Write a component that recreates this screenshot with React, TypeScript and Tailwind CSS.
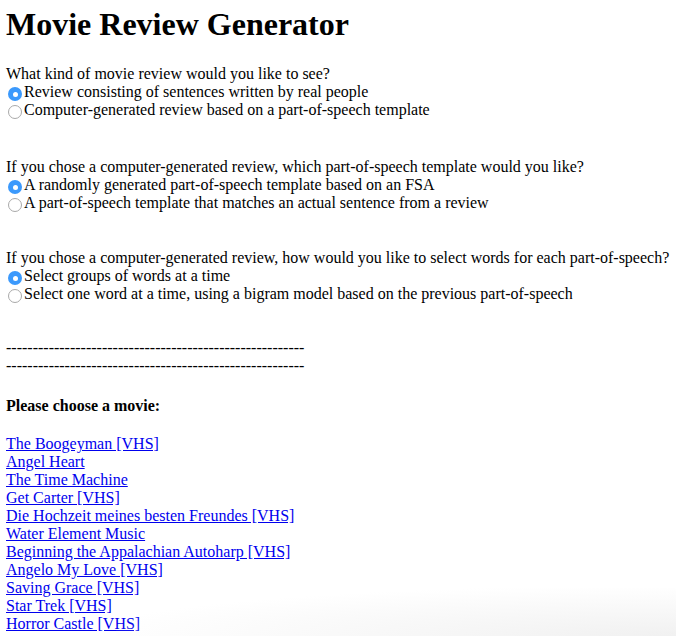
import React from "react";

const Radio = ({ checked }: { checked?: boolean }) =>
  checked ? (
    <span className="inline-flex items-center justify-center w-[14px] h-[14px] rounded-full bg-[#3b99fc] ml-[2px] mr-[2px] relative top-[2px] shrink-0">
      <span className="w-[5px] h-[5px] rounded-full bg-white" />
    </span>
  ) : (
    <span className="inline-block w-[14px] h-[14px] rounded-full border border-[#a9a9a9] bg-white ml-[2px] mr-[2px] relative top-[2px] shrink-0" />
  );

const Opt = ({ checked, children }: { checked?: boolean; children: React.ReactNode }) => (
  <div className="flex items-center h-[18px]">
    <Radio checked={checked} />
    <span>{children}</span>
  </div>
);

const movies = [
  "The Boogeyman [VHS]",
  "Angel Heart",
  "The Time Machine",
  "Get Carter [VHS]",
  "Die Hochzeit meines besten Freundes [VHS]",
  "Water Element Music",
  "Beginning the Appalachian Autoharp [VHS]",
  "Angelo My Love [VHS]",
  "Saving Grace [VHS]",
  "Star Trek [VHS]",
  "Horror Castle [VHS]",
];

export default function App() {
  return (
    <div className="relative w-[676px] h-[636px] overflow-hidden bg-white text-black font-['Liberation_Serif',serif] text-[16px] leading-[18px]">
      <div className="pl-[6px] pt-[6px]">
        <h1 className="text-[32px] leading-[37px] font-bold">Movie Review Generator</h1>
        <div className="mt-[22px]">
          <div className="h-[18px]">What kind of movie review would you like to see?</div>
          <Opt checked>Review consisting of sentences written by real people</Opt>
          <Opt>Computer-generated review based on a part-of-speech template</Opt>
        </div>
        <div className="mt-[39px]">
          <div className="h-[18px]">If you chose a computer-generated review, which part-of-speech template would you like?</div>
          <Opt checked>A randomly generated part-of-speech template based on an FSA</Opt>
          <Opt>A part-of-speech template that matches an actual sentence from a review</Opt>
        </div>
        <div className="mt-[37px]">
          <div className="h-[18px]">If you chose a computer-generated review, how would you like to select words for each part-of-speech?</div>
          <Opt checked>Select groups of words at a time</Opt>
          <Opt>Select one word at a time, using a bigram model based on the previous part-of-speech</Opt>
        </div>
        <div className="mt-[36px]">
          <div className="h-[18px]">--------------------------------------------------------</div>
          <div className="h-[18px]">--------------------------------------------------------</div>
        </div>
        <div className="mt-[22px] font-bold h-[18px]">Please choose a movie:</div>
        <div className="mt-[20px] flex flex-col items-start">
          {movies.map((m) => (
            <a key={m} href="#" className="text-[#0000ee] underline h-[18px]">
              {m}
            </a>
          ))}
        </div>
      </div>
      <div className="pointer-events-none absolute right-0 bottom-0 w-[560px] h-[48px] bg-[radial-gradient(ellipse_at_bottom_right,rgba(240,240,240,0.95),rgba(255,255,255,0)_75%)]" />
    </div>
  );
}
